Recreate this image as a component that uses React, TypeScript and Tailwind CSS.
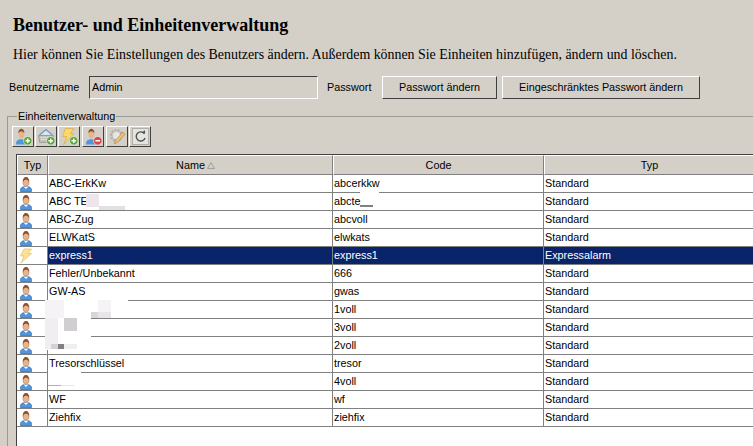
const ui = "font-['Liberation_Sans',sans-serif] text-[10.800px] leading-none"

const rows = [
  { name: "ABC-ErkKw", code: "abcerkkw", typ: "Standard" },
  { name: "ABC TE", code: "abcte", typ: "Standard" },
  { name: "ABC-Zug", code: "abcvoll", typ: "Standard" },
  { name: "ELWKatS", code: "elwkats", typ: "Standard" },
  { name: "express1", code: "express1", typ: "Expressalarm", selected: true },
  { name: "Fehler/Unbekannt", code: "666", typ: "Standard" },
  { name: "GW-AS", code: "gwas", typ: "Standard" },
  { name: "", code: "1voll", typ: "Standard" },
  { name: "", code: "3voll", typ: "Standard" },
  { name: "", code: "2voll", typ: "Standard" },
  { name: "Tresorschlüssel", code: "tresor", typ: "Standard" },
  { name: "", code: "4voll", typ: "Standard" },
  { name: "WF", code: "wf", typ: "Standard" },
  { name: "Ziehfix", code: "ziehfix", typ: "Standard" },
]

// retouched smears in the screenshot, coordinates relative to the table
const smears = [
  { c: "left-[69px] top-[39px] w-[13px] h-[13px] bg-[#ece6ec]" },
  { c: "left-[82px] top-[51px] w-[26px] h-[4px] bg-[#e2e0e2]" },
  { c: "left-[343px] top-[37px] w-[19px] h-[1px] bg-white" },
  { c: "left-[343px] top-[50px] w-[13px] h-[2px] bg-[#808080]" },
  { c: "left-[28px] top-[145px] w-[83px] h-[6px] bg-white" },
  { c: "left-[28px] top-[151px] w-[46px] h-[44px] bg-white" },
  { c: "left-[28px] top-[145px] w-[19px] h-[18px] bg-[#f6f3f6]" },
  { c: "left-[81px] top-[145px] w-[13px] h-[18px] bg-[#f6f3f6]" },
  { c: "left-[74px] top-[157px] w-[7px] h-[6px] bg-[#d8d6d8]" },
  { c: "left-[81px] top-[157px] w-[13px] h-[6px] bg-[#e8e4e8]" },
  { c: "left-[28px] top-[163px] w-[13px] h-[31px] bg-[#f1eef1]" },
  { c: "left-[47px] top-[163px] w-[13px] h-[13px] bg-[#d0ced0]" },
  { c: "left-[34px] top-[189px] w-[13px] h-[5px] bg-[#d4d2d4]" },
  { c: "left-[41px] top-[189px] w-[6px] h-[5px] bg-[#808080]" },
  { c: "left-[47px] top-[189px] w-[13px] h-[5px] bg-[#f1eef1]" },
  { c: "left-[31px] top-[217px] w-[33px] h-[1px] bg-white" },
  { c: "left-[31px] top-[230px] w-[13px] h-[1px] bg-[#b0b0b0]" },
  { c: "left-[44px] top-[230px] w-[13px] h-[1px] bg-[#e4e4e4]" },
]

function PersonIcon() {
  return (
    <svg width="16" height="16" viewBox="0 0 16 16">
      <path d="M2.500 15.500c-.5-3 1-5 5.500-5s6 2 5.500 5z" fill="#4f96e0" stroke="#2a62a8" strokeWidth="0.7" />
      <path d="M5.500 10.500h5L8 13z" fill="#ffffff" />
      <ellipse cx="8" cy="6" rx="3" ry="4.200" fill="#e8b48a" stroke="#9a6a48" strokeWidth="0.5" />
      <path d="M5 6C4.600 2.500 6.500 1 8 1s3.400 1.500 3 5C10.300 4.200 9 3.800 8 3.800S5.700 4.200 5 6z" fill="#8a5030" />
    </svg>
  )
}

function BoltIcon() {
  return (
    <svg width="16" height="16" viewBox="0 0 16 16" opacity={0.8}>
      <path d="M6 1h7.500L10 5.500h3.500L3 15l3-7H2.500z" fill="#fbdc78" stroke="#dcb050" strokeWidth="0.7" />
    </svg>
  )
}

function Badge({ color, minus }: { color: string; minus?: boolean }) {
  return (
    <g>
      <circle cx="12" cy="12" r="4" fill={color} stroke="#ffffff" strokeWidth="0.5" />
      <path d={minus ? "M9.800 12h4.400" : "M9.800 12h4.400M12 9.800v4.400"} stroke="#ffffff" strokeWidth="1.400" />
    </g>
  )
}

function ToolIcon({ kind }: { kind: number }) {
  if (kind === 0 || kind === 3) {
    return (
      <svg width="17" height="17" viewBox="0 0 16 16">
        <path d="M1 15.500c-.3-3 1-5 5-5s5.300 2 5 5z" fill="#4f96e0" />
        <ellipse cx="6" cy="5.500" rx="2.800" ry="4.200" fill="#e8b48a" />
        <path d="M3.200 5C3 2 4.500.6 6 .6S9 2 8.800 5C8 3.800 7 3.400 6 3.400S4 3.800 3.200 5z" fill="#8a5030" />
        {kind === 0 ? <Badge color="#5aa83c" /> : <Badge color="#d84a4a" minus />}
      </svg>
    )
  }
  if (kind === 1) {
    return (
      <svg width="17" height="17" viewBox="0 0 16 16">
        <path d="M1.500 6.500L7.500 1.500l6 5" fill="#dfe6ea" stroke="#6a98c4" strokeWidth="1.200" />
        <path d="M.5 7h14l-1 6.500h-12z" fill="#c4c2bc" stroke="#8a8a86" strokeWidth="0.7" />
        <path d="M2.500 8.800h10M3 10.800h9" stroke="#f4f4f0" strokeWidth="0.9" strokeDasharray="1 1" />
        <Badge color="#5aa83c" />
      </svg>
    )
  }
  if (kind === 2) {
    return (
      <svg width="17" height="17" viewBox="0 0 16 16">
        <path d="M4 .5h8L8.500 5.500H12L2.500 15.500l3-7.500H1.500z" fill="#fbd96a" stroke="#d8a93c" strokeWidth="0.6" />
        <Badge color="#5aa83c" />
      </svg>
    )
  }
  if (kind === 4) {
    return (
      <svg width="17" height="17" viewBox="0 0 16 16">
        <circle cx="7" cy="7" r="5" fill="none" stroke="#b0aeaa" strokeWidth="2.200" strokeDasharray="2 1" />
        <circle cx="7" cy="7" r="3" fill="#e8e6e2" />
        <path d="M5 15l1.200-3.500L13 4l2 1.800-6.800 7.700z" fill="#f0c070" stroke="#a87838" strokeWidth="0.5" />
      </svg>
    )
  }
  return (
    <svg width="17" height="17" viewBox="0 0 16 16">
      <rect x="0.500" y="0.500" width="15" height="15" fill="#e6e4e0" stroke="#a8a6a0" strokeWidth="0.8" />
      <path d="M11.800 5.500A4.300 4.300 0 1 0 12.300 9.500" fill="none" stroke="#505050" strokeWidth="1.300" />
      <path d="M8.500 4.800h3.800V2z" fill="#505050" />
    </svg>
  )
}

function RaisedButton({ label, width }: { label: string; width: string }) {
  return (
    <button className={`${width} h-[23px] bg-[#d4d0c8] border border-t-white border-l-white border-r-[#404040] border-b-[#404040] text-black ${ui}`}>
      {label}
    </button>
  )
}

function HeaderCell({ label, width, sort }: { label: string; width: string; sort?: boolean }) {
  return (
    <div className={`${width} shrink-0 h-[20px] relative flex items-center justify-center bg-[#d4d0c8] border border-t-white border-l-white border-r-[#808080] border-b-[#808080]`}>
      <span>{label}</span>
      {sort && (
        <svg className="absolute left-[158px] top-[6px]" width="8" height="7" viewBox="0 0 8 7">
          <path d="M4 .5L7.500 6.500H.5z" fill="none" stroke="#a0a0a0" />
        </svg>
      )}
    </div>
  )
}

export default function App() {
  return (
    <div className="w-[753px] h-[446px] overflow-hidden bg-[#d4d0c8] text-black">
      <div className="pl-[13px] pt-[15px] font-['Liberation_Serif',serif]">
        <h1 className="text-[18px] leading-[20px] font-bold">Benutzer- und Einheitenverwaltung</h1>
        <p className="mt-[10px] text-[13.900px] leading-[20px] whitespace-nowrap">
          Hier können Sie Einstellungen des Benutzers ändern. Außerdem können Sie Einheiten hinzufügen, ändern und löschen.
        </p>
      </div>

      <div className={`mt-[11px] pl-[9px] h-[23px] flex items-center ${ui}`}>
        <span className="w-[80px]">Benutzername</span>
        <div className="w-[229px] h-[23px] flex items-center pl-[2px] bg-[#d4d0c8] border border-t-[#404040] border-l-[#404040] border-r-white border-b-white">
          Admin
        </div>
        <span className="ml-[9px] w-[55px]">Passwort</span>
        <RaisedButton label="Passwort ändern" width="w-[115px]" />
        <div className="w-[5px]" />
        <RaisedButton label="Eingeschränktes Passwort ändern" width="w-[198px]" />
      </div>

      <fieldset className={`mt-[11px] ml-[7px] w-[800px] h-[340px] border border-[#9c9a94] pl-[4px] ${ui}`}>
        <legend className="ml-[5px] px-[1px] h-[13px] leading-[12px]">Einheitenverwaltung</legend>

        <div className="mt-[3px] flex gap-[1px] h-[21px]">
          {[0, 1, 2, 3, 4, 5].map((kind) => (
            <div
              key={kind}
              className={`w-[22px] h-[21px] flex items-center justify-center border border-t-white border-l-white border-r-[#404040] border-b-[#404040] ${kind === 3 ? "ml-[1px]" : ""} ${kind === 4 ? "ml-[1px]" : ""}`}
            >
              <ToolIcon kind={kind} />
            </div>
          ))}
        </div>

        <div className="relative mt-[7px] ml-[4px] h-[320px] w-[780px] bg-white border border-[#404040]">
          <div className="flex">
            <HeaderCell label="Typ" width="w-[31px]" />
            <HeaderCell label="Name" width="w-[285px]" sort />
            <HeaderCell label="Code" width="w-[211px]" />
            <HeaderCell label="Typ" width="w-[211px]" />
          </div>
          {rows.map((row) => (
            <div key={row.code} className="flex h-[18px] border-b border-[#808080]">
              <div className="w-[31px] shrink-0 flex items-center pl-[1px] border-r border-[#808080]">
                {row.selected ? <BoltIcon /> : <PersonIcon />}
              </div>
              <div className={`flex flex-1 items-center ${row.selected ? "bg-[#0a246a] text-white" : ""}`}>
                <div className="w-[285px] shrink-0 pl-[1px] self-stretch flex items-center border-r border-[#808080]">{row.name}</div>
                <div className="w-[211px] shrink-0 pl-[1px] self-stretch flex items-center border-r border-[#808080]">{row.code}</div>
                <div className="w-[211px] shrink-0 pl-[1px]">{row.typ}</div>
              </div>
            </div>
          ))}
          {smears.map((s) => (
            <div key={s.c} className={`absolute ${s.c}`} />
          ))}
        </div>
      </fieldset>
    </div>
  )
}
